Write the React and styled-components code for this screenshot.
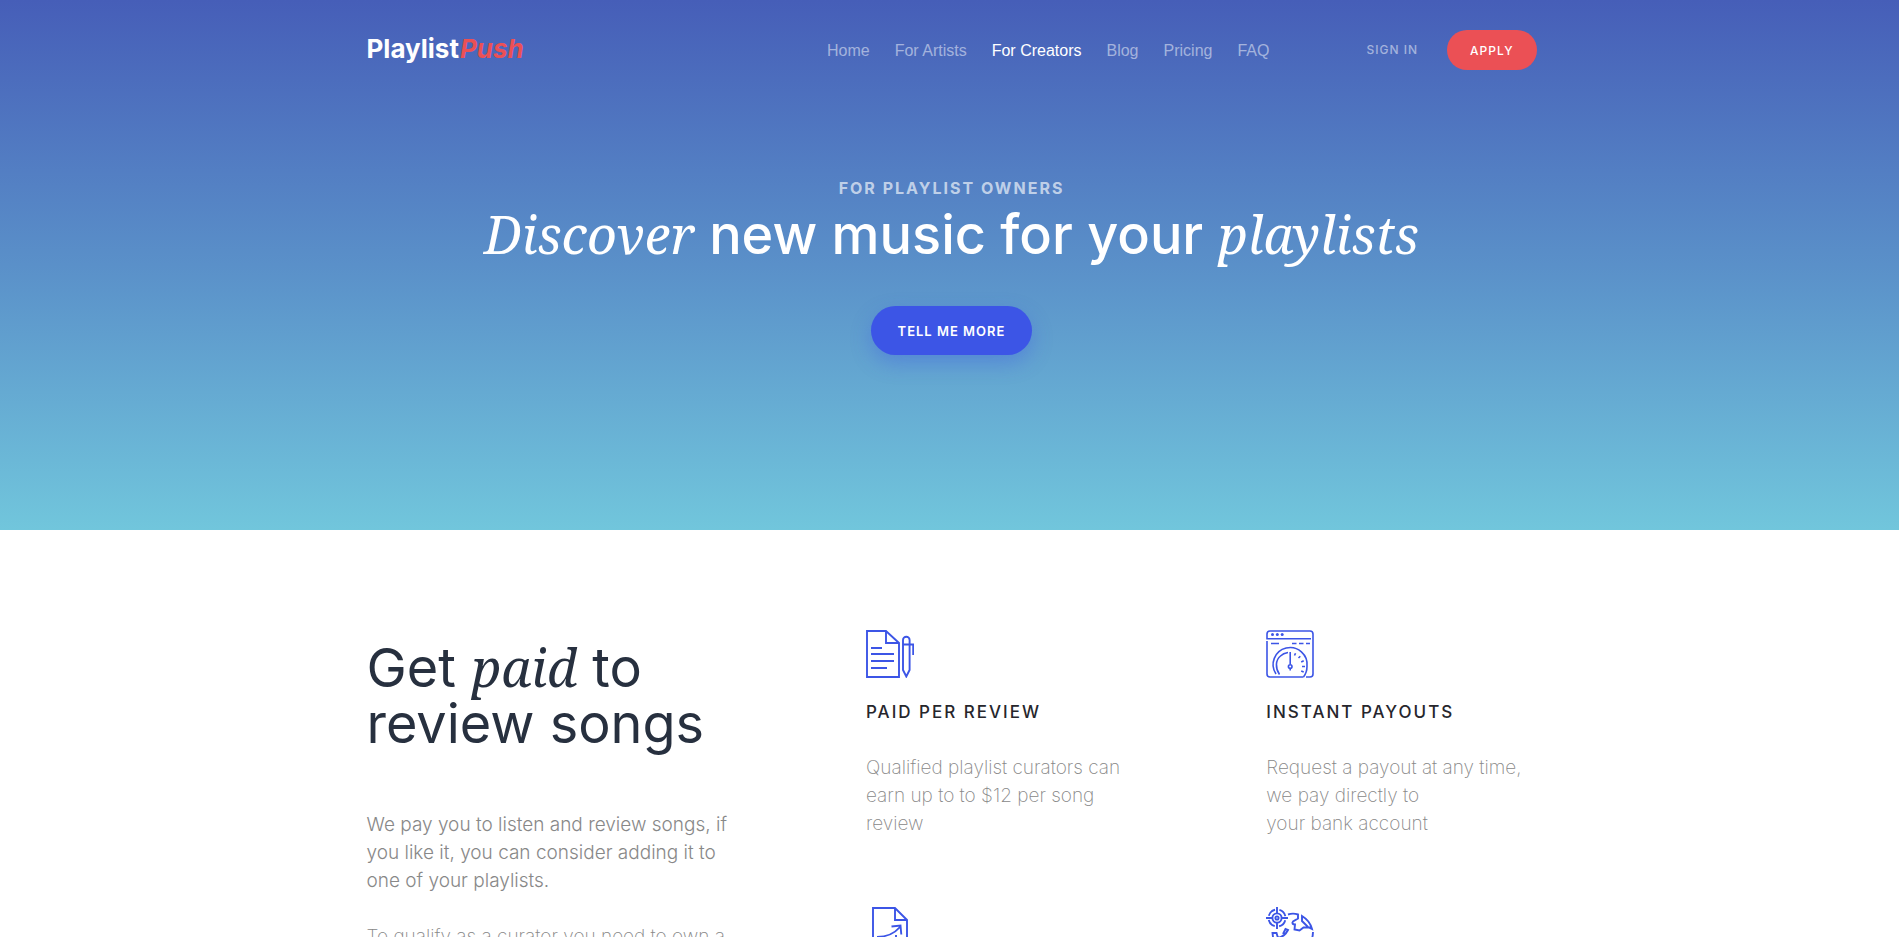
import React from "react";
import styled, { createGlobalStyle } from "styled-components";

const GlobalStyle = createGlobalStyle`
  * { box-sizing: border-box; }
  body {
    margin: 0;
    background: #fff;
    font-family: Inter, "Liberation Sans", sans-serif;
    color: #27303f;
  }
  h1, h2, h3, p { margin: 0; }
  a { text-decoration: none; }
`;

const Container = styled.div`
  width: 100%;
  max-width: 1170px;
  margin: 0 auto;
`;

const Hero = styled.div`
  min-height: 530px;
  padding-left: 4px;
  background: linear-gradient(180deg, #465eb8 0%, #5a90c9 50%, #71c6dc 100%);
`;

const Header = styled(Container).attrs({ as: "header" })`
  display: flex;
  align-items: center;
  height: 100px;
`;

const Logo = styled.a`
  margin-right: auto;
  padding-bottom: 2px;
  font-size: 26px;
  line-height: 30px;
  font-weight: 700;
  color: #fff;
`;

const LogoAccent = styled.em`
  margin-left: 1px;
  color: #eb5055;
`;

const Nav = styled.nav`
  display: flex;
  gap: 25px;
  margin-right: 97px;
  padding-top: 2px;
`;

const NavLink = styled.a`
  font-family: "Liberation Sans", Arial, sans-serif;
  font-size: 16px;
  line-height: 20px;
  color: ${(p) => (p.$active ? "#fff" : "rgba(255, 255, 255, 0.5)")};
`;

const SignIn = styled.a`
  margin-right: 29px;
  font-size: 12px;
  line-height: 20px;
  font-weight: 500;
  letter-spacing: 1px;
  color: rgba(255, 255, 255, 0.5);
`;

const Button = styled.button`
  border: 0;
  font-family: inherit;
  letter-spacing: 1px;
  color: #fff;
  cursor: pointer;
`;

const ApplyButton = styled(Button)`
  height: 40px;
  padding: 0 23px;
  border-radius: 20px;
  background: #eb5055;
  font-size: 12px;
  font-weight: 500;
`;

const MoreButton = styled(Button)`
  height: 49px;
  margin-top: 41px;
  padding: 0 27px;
  border-radius: 25px;
  background: #3c55e6;
  box-shadow: 0 8px 20px rgba(60, 85, 230, 0.35);
  font-size: 13px;
  font-weight: 600;
`;

const Intro = styled(Container)`
  display: flex;
  flex-direction: column;
  align-items: center;
  padding-top: 78px;
  text-align: center;
`;

const Kicker = styled.p`
  font-size: 16px;
  line-height: 20px;
  font-weight: 700;
  letter-spacing: 2px;
  color: rgba(255, 255, 255, 0.65);
`;

const Serif = styled.em`
  font-family: "Noto Serif", "DejaVu Serif Condensed", serif;
  font-size: 52px;
  line-height: 0;
  font-weight: 400;
  font-style: italic;
`;

const Title = styled.h1`
  margin-top: 7px;
  font-size: 54px;
  line-height: 60px;
  font-weight: 500;
  color: #fff;
`;

const Section = styled.section`
  padding: 100px 0 100px 4px;
`;

const Columns = styled(Container)`
  display: grid;
  grid-template-columns: 5fr 7fr;
`;

const Pitch = styled.div`
  max-width: 380px;
`;

const Heading = styled.h2`
  margin: 10px 0 59px;
  font-size: 54px;
  line-height: 56px;
  font-weight: 400;
  color: #27303f;
`;

const Text = styled.p`
  font-size: 19px;
  line-height: 28px;
  font-weight: ${(p) => (p.$thin ? 200 : 300)};
  color: #888;

  & + & { margin-top: 28px; }
`;

const Features = styled.div`
  display: grid;
  grid-template-columns: 4fr 3fr;
  row-gap: 69px;
  margin: 0 -30px 0 12px;
`;

const Feature = styled.article`
  svg { display: block; }
`;

const FeatureTitle = styled.h3`
  margin: 20px 0 28px;
  font-size: 17px;
  line-height: 28px;
  font-weight: 500;
  letter-spacing: 2px;
  color: #26262c;
`;

const Icon = ({ children }) => (
  <svg width="48" height="48" viewBox="0 0 48 48" fill="none" stroke="#3c55e6" strokeWidth="1.9" aria-hidden="true">
    {children}
  </svg>
);

const ReviewIcon = () => (
  <Icon>
    <path d="M20 1H1v46h32V13L20 1v12h13M5 18h11M5 24h23M5 31h23M5 38h16" />
    <path d="M37 40V10a3.3 3.3 0 0 1 6.6 0v30l-3.3 6.5zM37 14.5h10.2V25" />
  </Icon>
);

const PayoutIcon = () => (
  <Icon>
    <g strokeWidth="1.6">
      <path d="M45 8.7H1V4a3 3 0 0 1 3-3h40a3 3 0 0 1 3 3v40a3 3 0 0 1-3 3h-4M1 11v33a3 3 0 0 0 3 3h33.5" />
      <path d="M5 13.5h8M26 13.5h4.5M33 13.5h4.5M40 13.5h4" />
      <path d="M10 44a17 17 0 1 1 31-7.5c0 4-1.2 7.5-3.5 10.5M13.5 44.5C9 38 9.5 30 14.5 26c2-2 4.5-3 7.5-3.5" />
      <path d="M24.2 22v12M28.5 25.5l1-2.3M32.5 28l1.8-1.8M35.2 32l2.5-1.2M36 36.5h3M35.2 41l2.5 1M24.2 38.5v2" />
      <circle cx="24.2" cy="36.5" r="1.8" />
    </g>
    <g fill="#3c55e6" stroke="none">
      <circle cx="6.5" cy="4.6" r="1.5" />
      <circle cx="11.3" cy="4.6" r="1.5" />
      <circle cx="16.2" cy="4.6" r="1.5" />
    </g>
  </Icon>
);

const GrowthIcon = () => (
  <Icon>
    <path d="M29 1H7v46h34V13L29 1v12h12" />
    <path d="M11 30c10 0 17-3 23-10M25.5 19.5l9-1 .8 9M30 28v15M22 33v10M14 35v8" />
  </Icon>
);

const GlobeIcon = () => (
  <Icon>
    <circle cx="11" cy="11" r="8.5" strokeDasharray="8.9 4.45" strokeDashoffset="-2.2" />
    <circle cx="11" cy="11" r="4.6" />
    <circle cx="11" cy="11" r="1.6" />
    <path d="M11 0v6M11 16v6M0 11h6M16 11h6" />
    <path d="M22 7.5c3-1 7-1 10 0v4l-5 3c-1.500 2 0 3 2 3l-.5 5 5 1 4-3h8M36 9c5 3 8.500 7 10 13l-4-2-3-3-3-3zM47 25c0 11-9 22-20 22S7 38 6.500 26h4l1.500 5c5-1 8-4 10-8l-2.500-1-2.500 5" />
  </Icon>
);

const NAV = ["Home", "For Artists", "For Creators", "Blog", "Pricing", "FAQ"];

const FEATURES = [
  {
    icon: ReviewIcon,
    title: "PAID PER REVIEW",
    lines: ["Qualified playlist curators can", "earn up to to $12 per song", "review"],
  },
  {
    icon: PayoutIcon,
    title: "INSTANT PAYOUTS",
    lines: ["Request a payout at any time,", "we pay directly to", "your bank account"],
  },
  { icon: GrowthIcon },
  { icon: GlobeIcon },
];

const Lines = ({ lines }) =>
  lines.map((line, i) => (
    <React.Fragment key={line}>
      {i > 0 && <br />}
      {line}
    </React.Fragment>
  ));

export default function App() {
  return (
    <>
      <GlobalStyle />
      <Hero>
        <Header>
          <Logo href="#">
            Playlist<LogoAccent>Push</LogoAccent>
          </Logo>
          <Nav>
            {NAV.map((item) => (
              <NavLink key={item} href="#" $active={item === "For Creators"}>
                {item}
              </NavLink>
            ))}
          </Nav>
          <SignIn href="#">SIGN IN</SignIn>
          <ApplyButton>APPLY</ApplyButton>
        </Header>
        <Intro>
          <Kicker>FOR PLAYLIST OWNERS</Kicker>
          <Title>
            <Serif>Discover</Serif> new music for your <Serif>playlists</Serif>
          </Title>
          <MoreButton>TELL ME MORE</MoreButton>
        </Intro>
      </Hero>
      <Section>
        <Columns>
          <Pitch>
            <Heading>
              Get <Serif>paid</Serif> to
              <br />
              review songs
            </Heading>
            <Text>
              <Lines
                lines={[
                  "We pay you to listen and review songs, if",
                  "you like it, you can consider adding it to",
                  "one of your playlists.",
                ]}
              />
            </Text>
            <Text $thin>To qualify as a curator you need to own a</Text>
          </Pitch>
          <Features>
            {FEATURES.map(({ icon: FeatureIcon, title, lines }, i) => (
              <Feature key={i}>
                <FeatureIcon />
                {title && <FeatureTitle>{title}</FeatureTitle>}
                {lines && (
                  <Text $thin>
                    <Lines lines={lines} />
                  </Text>
                )}
              </Feature>
            ))}
          </Features>
        </Columns>
      </Section>
    </>
  );
}
